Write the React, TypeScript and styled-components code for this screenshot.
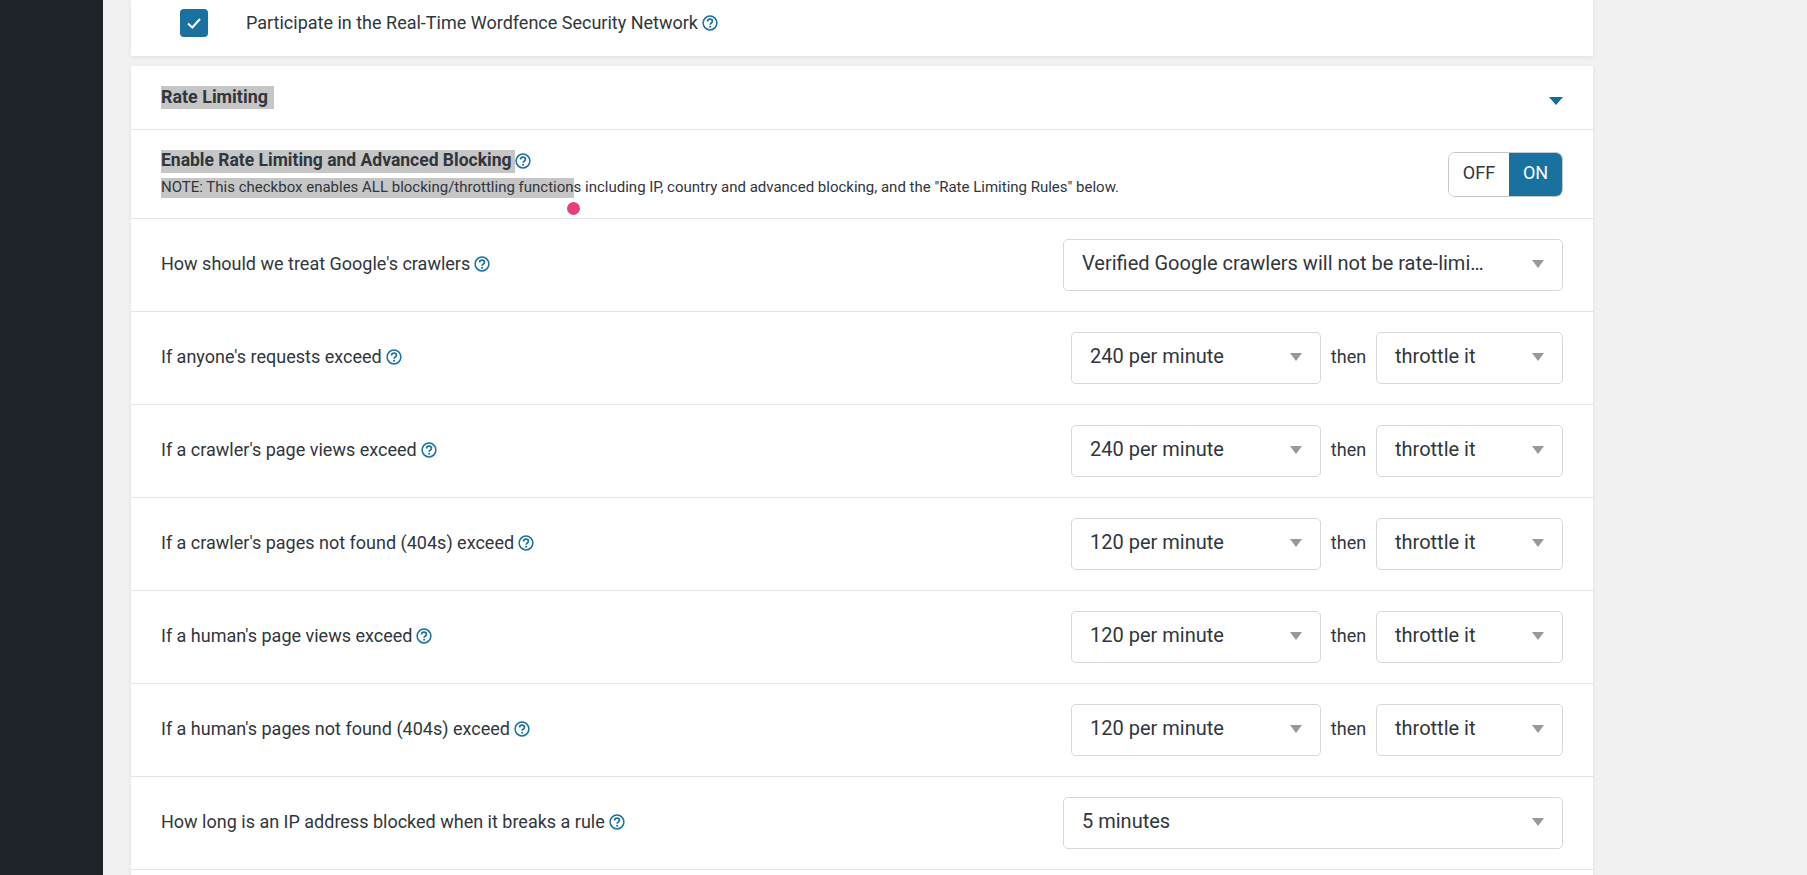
import styled, { createGlobalStyle } from "styled-components";

const GlobalStyle = createGlobalStyle`
  html, body {
    margin: 0;
    height: 100%;
    overflow: hidden;
    background: #f1f1f1;
  }
  body {
    font-family: Roboto, "Liberation Sans", sans-serif;
    color: #30363c;
  }
  * {
    box-sizing: border-box;
  }
`;

const Help = () => (
  <HelpIcon viewBox="0 0 16 16" aria-hidden="true">
    <circle cx="8" cy="8" r="6.9" fill="none" stroke="currentColor" strokeWidth="1.5" />
    <path
      d="M5.6 6.4c0-1.4 1-2.2 2.4-2.2s2.4.8 2.4 2c0 1-.6 1.5-1.3 2-.7.4-1 .8-1 1.5"
      fill="none"
      stroke="currentColor"
      strokeWidth="1.7"
    />
    <circle cx="8.1" cy="11.8" r="1.05" fill="currentColor" />
  </HelpIcon>
);

const Select = ({ value, $wide, $small }: { value: string; $wide?: boolean; $small?: boolean }) => (
  <SelectBox $wide={$wide} $small={$small}>
    <span>{value}</span>
    <SelectArrow />
  </SelectBox>
);

const rateRows = [
  { label: "If anyone's requests exceed", rate: "240 per minute" },
  { label: "If a crawler's page views exceed", rate: "240 per minute" },
  { label: "If a crawler's pages not found (404s) exceed", rate: "120 per minute" },
  { label: "If a human's page views exceed", rate: "120 per minute" },
  { label: "If a human's pages not found (404s) exceed", rate: "120 per minute" },
];

export default function App() {
  return (
    <Page>
      <GlobalStyle />
      <Sidebar />
      <Content>
        <TopCard>
          <Checkbox>
            <svg width="16" height="16" viewBox="0 0 16 16" fill="none">
              <path d="M2 8.5l4.3 4L14 4" stroke="#fff" strokeWidth="2" />
            </svg>
          </Checkbox>
          <Label>Participate in the Real-Time Wordfence Security Network</Label>
          <Help />
        </TopCard>

        <Card>
          <HeaderRow>
            <Title>
              <Selected $trail={6} $lift={2}>
                Rate Limiting
              </Selected>
            </Title>
            <CollapseArrow />
          </HeaderRow>

          <EnableRow>
            <div>
              <Heading>
                <Selected $trail={4} $lift={2}>
                  Enable Rate Limiting and Advanced Blocking
                </Selected>
                <Help />
              </Heading>
              <Note>
                <Selected $lift={2}>
                  NOTE: This checkbox enables ALL blocking/throttling function
                  <PinkDot />
                </Selected>
                s including IP, country and advanced blocking, and the "Rate Limiting Rules" below.
              </Note>
            </div>
            <Toggle>
              <ToggleOption>OFF</ToggleOption>
              <ToggleOption $active>ON</ToggleOption>
            </Toggle>
          </EnableRow>

          <Row>
            <RowLabel>
              <Label>How should we treat Google's crawlers</Label>
              <Help />
            </RowLabel>
            <Select $wide value="Verified Google crawlers will not be rate-limi…" />
          </Row>

          {rateRows.map((row) => (
            <Row key={row.label}>
              <RowLabel>
                <Label>{row.label}</Label>
                <Help />
              </RowLabel>
              <Controls>
                <Select value={row.rate} />
                <Then>then</Then>
                <Select $small value="throttle it" />
              </Controls>
            </Row>
          ))}

          <Row>
            <RowLabel>
              <Label>How long is an IP address blocked when it breaks a rule</Label>
              <Help />
            </RowLabel>
            <Select $wide value="5 minutes" />
          </Row>

          <Row />
        </Card>
      </Content>
    </Page>
  );
}

const Page = styled.div`
  display: flex;
  height: 875px;
  overflow: hidden;
`;

const Sidebar = styled.div`
  width: 103px;
  flex: none;
  background: #1d2329;
`;

const Content = styled.div`
  width: 1462px;
  margin-left: 28px;
  display: flex;
  flex-direction: column;
  gap: 10px;
`;

const TopCard = styled.div`
  height: 56px;
  flex: none;
  background: #fff;
  box-shadow: 0 1px 4px rgba(0, 0, 0, 0.08);
  display: flex;
  align-items: center;
  padding: 0 0 10px 49px;
`;

const Checkbox = styled.div`
  width: 28px;
  height: 28px;
  margin-right: 38px;
  border-radius: 4px;
  background: #19719f;
  display: flex;
  align-items: center;
  justify-content: center;
`;

const Card = styled.div`
  background: #fff;
  box-shadow: 0 1px 4px rgba(0, 0, 0, 0.08);
`;

const Label = styled.span`
  font-size: 18px;
  line-height: 22px;
`;

const HelpIcon = styled.svg`
  width: 16px;
  height: 16px;
  flex: none;
  margin-left: 4px;
  color: #19719f;
`;

const HeaderRow = styled.div`
  height: 64px;
  display: flex;
  align-items: center;
  justify-content: space-between;
  padding: 0 30px;
  border-bottom: 1px solid #e2e4e7;
`;

const Title = styled.div`
  display: flex;
  font-size: 17.9px;
  line-height: 21px;
  font-weight: 700;
`;

const Selected = styled.span<{ $trail?: number; $lift?: number }>`
  display: inline-block;
  position: relative;
  padding-right: ${(p) => p.$trail ?? 0}px;
  padding-bottom: ${(p) => p.$lift ?? 0}px;
  background: #c6c6c6;
`;

const CollapseArrow = styled.div`
  width: 0;
  height: 0;
  margin-top: 6px;
  border-left: 7.5px solid transparent;
  border-right: 7.5px solid transparent;
  border-top: 8px solid #0d6f98;
`;

const EnableRow = styled.div`
  height: 89px;
  display: flex;
  align-items: center;
  justify-content: space-between;
  padding: 0 30px;
  border-bottom: 1px solid #e2e4e7;
`;

const Heading = styled.div`
  display: flex;
  align-items: center;
  font-size: 17.5px;
  line-height: 21px;
  font-weight: 700;

  svg {
    margin-left: 0;
    margin-bottom: 2px;
  }
`;

const Note = styled.div`
  margin-top: 5px;
  font-size: 15px;
  line-height: 18px;
`;

const PinkDot = styled.span`
  position: absolute;
  right: -6px;
  bottom: -17px;
  width: 13px;
  height: 13px;
  border-radius: 50%;
  background: #e83e80;
`;

const Toggle = styled.div`
  width: 115px;
  height: 45px;
  display: flex;
  border: 1px solid #c6c9cc;
  border-radius: 7px;
  overflow: hidden;
`;

const ToggleOption = styled.div<{ $active?: boolean }>`
  flex: ${(p) => (p.$active ? "0 0 53px" : "1")};
  display: flex;
  align-items: center;
  justify-content: center;
  padding-bottom: 4px;
  font-size: 18px;
  background: ${(p) => (p.$active ? "#19719f" : "#fff")};
  color: ${(p) => (p.$active ? "#fff" : "#30363c")};
`;

const Row = styled.div`
  height: 93px;
  display: flex;
  align-items: center;
  justify-content: space-between;
  padding: 0 30px;
  border-bottom: 1px solid #e2e4e7;
`;

const RowLabel = styled.div`
  display: flex;
  align-items: center;
  padding-bottom: 3px;
`;

const Controls = styled.div`
  display: flex;
  align-items: center;
`;

const Then = styled.span`
  width: 55px;
  text-align: center;
  font-size: 18px;
  padding-bottom: 4px;
`;

const SelectBox = styled.div<{ $wide?: boolean; $small?: boolean }>`
  width: ${(p) => (p.$wide ? "500px" : p.$small ? "187px" : "250px")};
  height: 52px;
  display: flex;
  align-items: center;
  justify-content: space-between;
  padding: 0 18px;
  background: #fff;
  border: 1px solid #d5d7da;
  border-radius: 5px;
  font-size: 20px;

  span {
    padding-bottom: 5px;
  }
`;

const SelectArrow = styled.div`
  width: 0;
  height: 0;
  margin-bottom: 2px;
  border-left: 6.5px solid transparent;
  border-right: 6.5px solid transparent;
  border-top: 8px solid #999;
`;
